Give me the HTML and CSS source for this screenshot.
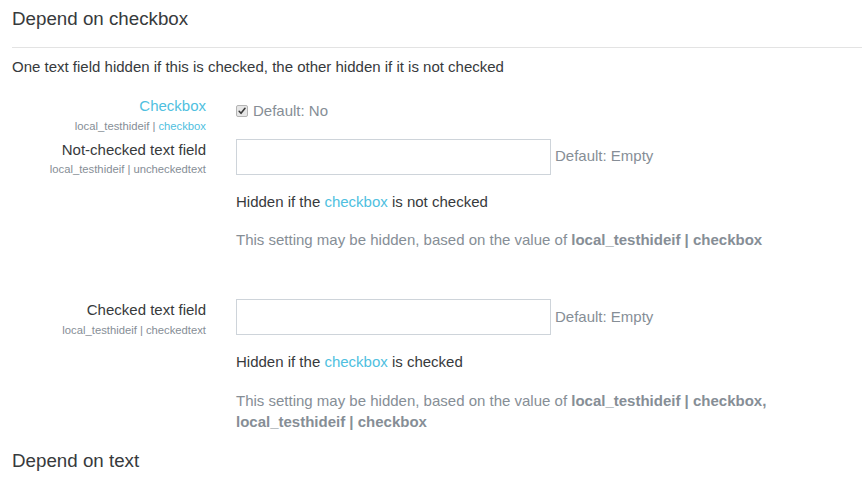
FILE: index.html
```html
<!DOCTYPE html>
<html>
<head>
<meta charset="utf-8">
<link rel="stylesheet" href="styles.css">
</head>
<body>
<div class="page">
  <h3 class="section-title">Depend on checkbox</h3>
  <div class="rule"></div>
  <p class="section-desc">One text field hidden if this is checked, the other hidden if it is not checked</p>

  <div class="row row-check">
    <div class="label-col">
      <div class="label link">Checkbox</div>
      <div class="sub">local_testhideif | <span class="link">checkbox</span></div>
    </div>
    <div class="field-col">
      <div class="check-line">
        <span class="cb" role="checkbox" aria-checked="true" aria-disabled="true"><svg width="12" height="12" viewBox="0 0 12 12"><path d="M2.6 6.4 L4.8 8.8 L9.6 2.8" fill="none" stroke="#3a3a3a" stroke-width="1.9" stroke-linecap="round" stroke-linejoin="round"/></svg></span>
        <span class="default">Default: No</span>
      </div>
    </div>
  </div>

  <div class="row row-text">
    <div class="label-col">
      <div class="label">Not-checked text field</div>
      <div class="sub">local_testhideif | uncheckedtext</div>
    </div>
    <div class="field-col">
      <div class="input-line">
        <div class="text-input"></div>
        <span class="default">Default: Empty</span>
      </div>
      <p class="hint">Hidden if the <span class="link">checkbox</span> is not checked</p>
      <p class="note">This setting may be hidden, based on the value of <b>local_testhideif | checkbox</b></p>
    </div>
  </div>

  <div class="row row-text row-last">
    <div class="label-col">
      <div class="label">Checked text field</div>
      <div class="sub">local_testhideif | checkedtext</div>
    </div>
    <div class="field-col">
      <div class="input-line">
        <div class="text-input"></div>
        <span class="default">Default: Empty</span>
      </div>
      <p class="hint">Hidden if the <span class="link">checkbox</span> is checked</p>
      <p class="note">This setting may be hidden, based on the value of <b>local_testhideif | checkbox,<br>local_testhideif | checkbox</b></p>
    </div>
  </div>

  <h3 class="section-title next">Depend on text</h3>
</div>
</body>
</html>
```

FILE: styles.css
```css
html, body {
  margin: 0;
  padding: 0;
  background: #fff;
}
body {
  font-family: "Liberation Sans", Arial, sans-serif;
  font-size: 15px;
  line-height: 22.5px;
  color: #373a3c;
}
.page {
  padding: 8px 0 0 12px;
}
.section-title {
  margin: 0;
  font-size: 18.75px;
  line-height: 22.5px;
  font-weight: normal;
  color: #373a3c;
}
.rule {
  height: 1px;
  background: #e3e3e3;
  margin-top: 16px;
}
.section-desc {
  margin: 8px 0 0;
}
.row {
  display: flex;
  gap: 30px;
}
.row-check {
  margin-top: 17px;
}
.row-text {
  margin-top: 4px;
}
.row-last {
  margin-top: 49px;
}
.label-col {
  width: 194px;
  flex: none;
  text-align: right;
}
.label {
  font-size: 15px;
  line-height: 22.5px;
}
.sub {
  font-size: 11.25px;
  line-height: 17px;
  color: #868e96;
}
.link {
  color: #4fbfe0;
}
.field-col {
  flex: 1;
}
.check-line {
  display: flex;
  align-items: center;
  padding-top: 5px;
}
.cb {
  display: inline-flex;
  align-items: center;
  justify-content: center;
  box-sizing: border-box;
  width: 12px;
  height: 12px;
  margin: 0 5px 0 0;
  border: 1px solid #b4b4b4;
  border-radius: 2px;
  background: #e6e6e6;
}
.cb svg {
  display: block;
  width: 10px;
  height: 10px;
}
.default {
  color: #868e96;
}
.input-line {
  display: flex;
  align-items: center;
  gap: 4px;
}
.text-input {
  width: 313px;
  height: 34px;
  border: 1px solid #ced4da;
  border-radius: 0;
  background: #fff;
}
.hint {
  margin: 16px 0 0;
}
.note {
  margin: 16px 0 0;
  line-height: 21px;
  color: #868e96;
}
.note b {
  font-weight: bold;
}
.next {
  margin-top: 18px;
}
```
